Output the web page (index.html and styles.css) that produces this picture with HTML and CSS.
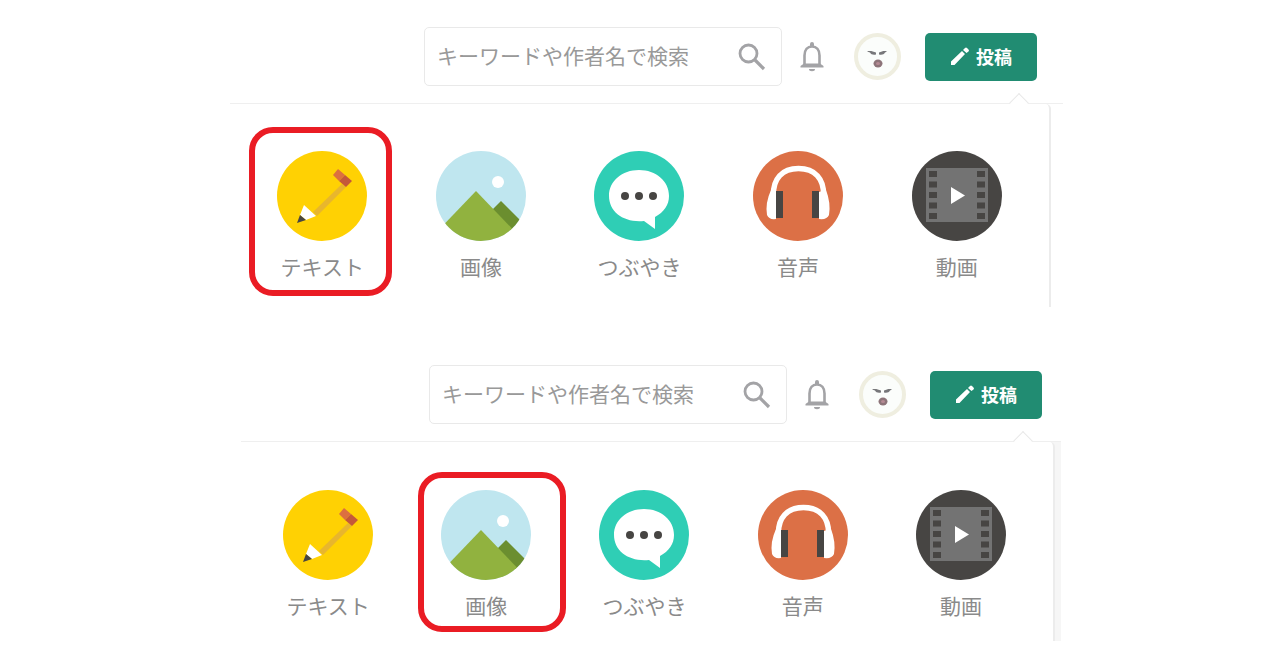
FILE: index.html
```html
<!DOCTYPE html>
<html lang="ja">
<head>
    <meta charset="UTF-8">
    <meta name="viewport" content="width=device-width, initial-scale=1.0">
    <title>投稿メニュー</title>
    <link rel="stylesheet" href="styles.css">
</head>
<body>
    <!-- Shared icons -->
    <svg class="sprite" aria-hidden="true">
        <symbol id="icon-search" viewBox="0 0 28 28">
            <circle cx="10.500" cy="10.500" r="8.500" fill="none" stroke="currentColor" stroke-width="2.800"/>
            <path d="M17 17l9 9" stroke="currentColor" stroke-width="3.200"/>
        </symbol>
        <symbol id="icon-bell" viewBox="0 0 26 30">
            <path d="M5.500 24V13.500C5.500 8 8.500 4.500 13 4.500S20.500 8 20.500 13.500V24" fill="none" stroke="currentColor" stroke-width="2.600"/>
            <path d="M11 4V2a2 2 0 0 1 4 0v2zM5 21.500h16l3.500 2.500V25.500H1.500V24zM10 27h6a3 2.200 0 0 1-6 0z" fill="currentColor"/>
        </symbol>
        <symbol id="icon-face" viewBox="0 0 47 47">
            <circle cx="23.500" cy="23.500" r="21.500" fill="#fbfdfb" stroke="#efeee0" stroke-width="4"/>
            <path d="M13 18.500c3-1 6 0 9 1v2c-3 .5-5 0-6-2zM33 18.500c-3-1-5 0-8 1v2c3 .5 5 0 6-2z" fill="#77777a"/>
            <ellipse cx="24" cy="30.500" rx="4.500" ry="4" fill="#8d7479"/>
            <ellipse cx="24" cy="30.500" rx="2" ry="1.500" fill="#b58a94"/>
        </symbol>
        <symbol id="icon-edit" viewBox="0 0 20 20">
            <path d="M1 15.500L12 5l3 3L4.500 19H1zM13 4l2-2q1-1 2 0l1.500 1.500q1 1 0 2L16.500 7z" fill="currentColor"/>
        </symbol>
        <symbol id="icon-text" viewBox="0 0 90 90">
            <circle cx="45" cy="45" r="45" fill="#ffd103"/>
            <path d="M65 33l4 3-29 29-4-4z" fill="#e8b62d"/>
            <path d="M61 18l7 6-6 6-6-6z" fill="#dc7040"/>
            <path d="M68 24l7 6-6 6-7-6z" fill="#c4583a"/>
            <path d="M27 54l12 11-10 4-6-5z" fill="#fff"/>
            <path d="M20 72l3-8 6 5z" fill="#474543"/>
        </symbol>
        <symbol id="icon-image" viewBox="0 0 90 90">
            <clipPath id="round"><circle cx="45" cy="45" r="45"/></clipPath>
            <g clip-path="url(#round)">
                <path d="M0 0h90v90H0z" fill="#bfe6ef"/>
                <circle cx="62" cy="31" r="6" fill="#fff"/>
                <path d="M65 50l25 25-10 10-24-26z" fill="#6b8e2f"/>
                <path d="M40 40l48 50H-8z" fill="#91b23f"/>
            </g>
        </symbol>
        <symbol id="icon-tweet" viewBox="0 0 90 90">
            <circle cx="45" cy="45" r="45" fill="#2fceb5"/>
            <path d="M45 19c17 0 30 11 30 26 0 9-5 16-14 21v12l-11-8c-20 2-35-9-35-25 0-15 13-26 30-26z" fill="#fff"/>
            <g fill="#474543">
                <circle cx="31" cy="45" r="4"/>
                <circle cx="45" cy="45" r="4"/>
                <circle cx="59" cy="45" r="4"/>
            </g>
        </symbol>
        <symbol id="icon-audio" viewBox="0 0 90 90">
            <circle cx="45" cy="45" r="45" fill="#dc7046"/>
            <path d="M20.500 44C20 28 29 17.500 45.500 17.500S71 28 70.500 44" fill="none" stroke="#fff" stroke-width="5.500"/>
            <path d="M18 39l5 2v27q-7 1-9-4-2-12 4-25zM73 39l-7 2v27q8 1 10-4 2-12-3-25z" fill="#fff"/>
            <path d="M23 40h7v27h-7zM59 40h7v27h-7z" fill="#474543"/>
        </symbol>
        <symbol id="icon-movie" viewBox="0 0 90 90">
            <circle cx="45" cy="45" r="45" fill="#474543"/>
            <path d="M14 17h62v54H14z" fill="#737373"/>
            <path d="M21 20v50M69 20v50" stroke="#474543" stroke-width="8" stroke-dasharray="6 4.500"/>
            <path d="M39 36l14 8.500L39 53z" fill="#fff"/>
        </symbol>
    </svg>

    <main>
        <section class="shot">
            <header class="bar">
                <form class="search">
                    <input type="search" placeholder="キーワードや作者名で検索" aria-label="検索">
                    <button type="button" aria-label="検索する"><svg><use href="#icon-search"/></svg></button>
                </form>
                <button type="button" class="bell" aria-label="お知らせ"><svg><use href="#icon-bell"/></svg></button>
                <a href="#" class="avatar" aria-label="マイページ"><svg><use href="#icon-face"/></svg></a>
                <button type="button" class="post"><svg><use href="#icon-edit"/></svg>投稿</button>
            </header>
            <div class="page">
                <nav class="menu">
                    <a href="#" class="tile marked"><svg><use href="#icon-text"/></svg>テキスト</a>
                    <a href="#" class="tile"><svg><use href="#icon-image"/></svg>画像</a>
                    <a href="#" class="tile"><svg><use href="#icon-tweet"/></svg>つぶやき</a>
                    <a href="#" class="tile"><svg><use href="#icon-audio"/></svg>音声</a>
                    <a href="#" class="tile"><svg><use href="#icon-movie"/></svg>動画</a>
                </nav>
            </div>
        </section>

        <section class="shot shot-image">
            <header class="bar">
                <form class="search">
                    <input type="search" placeholder="キーワードや作者名で検索" aria-label="検索">
                    <button type="button" aria-label="検索する"><svg><use href="#icon-search"/></svg></button>
                </form>
                <button type="button" class="bell" aria-label="お知らせ"><svg><use href="#icon-bell"/></svg></button>
                <a href="#" class="avatar" aria-label="マイページ"><svg><use href="#icon-face"/></svg></a>
                <button type="button" class="post"><svg><use href="#icon-edit"/></svg>投稿</button>
            </header>
            <div class="page">
                <nav class="menu">
                    <a href="#" class="tile"><svg><use href="#icon-text"/></svg>テキスト</a>
                    <a href="#" class="tile marked"><svg><use href="#icon-image"/></svg>画像</a>
                    <a href="#" class="tile"><svg><use href="#icon-tweet"/></svg>つぶやき</a>
                    <a href="#" class="tile"><svg><use href="#icon-audio"/></svg>音声</a>
                    <a href="#" class="tile"><svg><use href="#icon-movie"/></svg>動画</a>
                </nav>
            </div>
        </section>
    </main>
</body>
</html>
```
FILE: styles.css
```css
* {
    box-sizing: border-box;
}

body {
    margin: 0;
    background-color: #fff;
    color: #8a8a8a;
    font-family: "Noto Sans CJK JP", sans-serif;
    font-size: 21px;
    line-height: 28px;
}

button {
    border: none;
    padding: 0;
    background: none;
    color: inherit;
    font-family: inherit;
    cursor: pointer;
}

svg {
    display: block;
}

.sprite {
    position: absolute;
    width: 0;
    height: 0;
}

main {
    max-width: 846px;
    margin: 0 auto;
    padding-left: 13px;
    display: flex;
    flex-direction: column;
    gap: 31px;
}

/* Header */
.bar {
    display: flex;
    justify-content: flex-end;
    align-items: center;
    padding: 27px 26px 17px 0;
}

.search {
    display: flex;
    align-items: center;
    width: 358px;
    height: 59px;
    padding: 0 15px 0 12px;
    border: 1px solid #e9e9e9;
    border-radius: 5px;
}

.search input {
    flex: 1;
    min-width: 0;
    padding: 0 0 4px;
    border: none;
    outline: none;
    background: none;
    font-family: inherit;
    font-size: 21px;
}

.search input::placeholder {
    color: #999;
    opacity: 1;
}

.search svg {
    width: 28px;
    height: 28px;
    color: #a3a3a6;
}

.bell {
    margin-left: 17px;
    color: #a3a3a6;
}

.bell svg {
    width: 26px;
    height: 30px;
}

.avatar {
    margin: 0 24px 0 29px;
}

.avatar svg {
    width: 47px;
    height: 47px;
}

.post {
    display: flex;
    justify-content: center;
    align-items: center;
    gap: 6px;
    width: 112px;
    height: 48px;
    padding-bottom: 2px;
    border-radius: 5px;
    background-color: #218c72;
    color: #fff;
    font-size: 18px;
    font-weight: bold;
}

.post svg {
    width: 20px;
    height: 20px;
}

/* Post menu */
.page {
    border-top: 1px solid #efefef;
}

.menu {
    position: relative;
    display: grid;
    grid-template-columns: repeat(5, 1fr);
    margin-right: 12px;
    padding: 47px 13px 27px;
    border-right: 2px solid #ececec;
    border-top-right-radius: 5px;
    background-color: #fff;
}

.menu::before {
    content: "";
    position: absolute;
    top: -8px;
    right: 23px;
    width: 13px;
    height: 13px;
    border: 1px solid #e9e9e9;
    border-right: none;
    border-bottom: none;
    background: linear-gradient(135deg, #fff 50%, transparent 50%);
    transform: rotate(45deg);
}

.tile {
    position: relative;
    display: flex;
    flex-direction: column;
    align-items: center;
    gap: 11px;
    color: #8a8a8a;
    text-decoration: none;
}

.tile svg {
    width: 90px;
    height: 90px;
}

.marked::after {
    content: "";
    position: absolute;
    top: -24px;
    right: 10px;
    bottom: -16px;
    left: 6px;
    border: 6px solid #ea1c24;
    border-radius: 24px;
}

/* Second menu */
.shot-image .bar {
    padding-right: 21px;
}

.shot-image .page {
    margin: 0 2px 0 11px;
    background-color: #f6f6f6;
}

.shot-image .menu {
    margin-right: 6px;
    padding: 48px 13px 22px 8px;
}

.shot-image .marked::after {
    top: -18px;
    right: -1px;
    bottom: -13px;
    left: 11px;
}
```
